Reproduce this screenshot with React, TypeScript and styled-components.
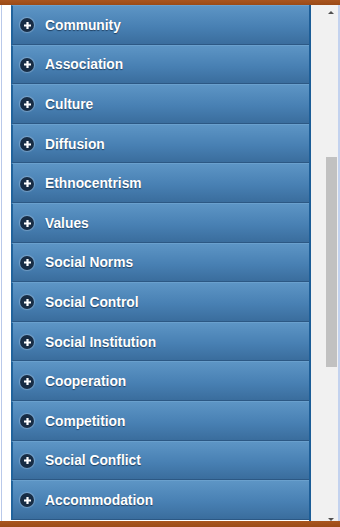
import React from 'react';
import styled, { createGlobalStyle } from 'styled-components';

const GlobalStyle = createGlobalStyle`
  html, body {
    margin: 0;
    padding: 0;
    background: #ffffff;
  }
  body {
    font-family: 'Liberation Sans', Arial, sans-serif;
  }
`;

const topics = [
  'Community',
  'Association',
  'Culture',
  'Diffusion',
  'Ethnocentrism',
  'Values',
  'Social Norms',
  'Social Control',
  'Social Institution',
  'Cooperation',
  'Competition',
  'Social Conflict',
  'Accommodation',
];

const Frame = styled.div`
  width: 340px;
  height: 527px;
  display: flex;
  flex-direction: column;
  overflow: hidden;
`;

const BrownBar = styled.div<{ h: number }>`
  height: ${(p) => p.h}px;
  flex: none;
  background: linear-gradient(#a9551e, #9a4a17);
`;

const Body = styled.div`
  flex: 1;
  display: flex;
  min-height: 0;
  background: #ffffff;
`;

const Gutter = styled.div`
  width: 9px;
  flex: none;
  border-left: 1px solid #b9c9ea;
  margin-left: 1px;
  background: #ffffff;
`;

const List = styled.ul`
  list-style: none;
  margin: 0;
  padding: 0;
  width: 298px;
  flex: none;
  border-right: 2px solid #1c5d97;
  display: flex;
  flex-direction: column;
`;

const Row = styled.li`
  height: 39.6px;
  box-sizing: border-box;
  display: flex;
  align-items: center;
  gap: 11px;
  padding-left: 7px;
  padding-top: 1px;
  border-left: 2px solid #21639c;
  border-top: 1px solid #6aa0cd;
  border-bottom: 1px solid #2c5884;
  background: linear-gradient(#5d95c5, #4880b3 55%, #3a6d9d);
  color: #ffffff;
  font-size: 13.8px;
  font-weight: bold;
  text-shadow: 0 1px 1px #1f3f60;
`;

const PlusIcon = styled.span`
  width: 14px;
  height: 14px;
  flex: none;
  display: flex;
  align-items: center;
  justify-content: center;
  border-radius: 50%;
  background: #172c44;
  box-shadow: 0 0 1px 1px rgba(200, 220, 240, 0.35);
`;

const Track = styled.div`
  width: 26px;
  flex: none;
  background: #f1f1f1;
  display: flex;
  flex-direction: column;
  align-items: flex-end;
  padding-right: 1px;
`;

const Arrow = styled.div<{ down?: boolean }>`
  width: 0;
  height: 0;
  margin: ${(p) => (p.down ? 'auto 3px 0 0' : '6px 3px 0 0')};
  border-left: 3px solid transparent;
  border-right: 3px solid transparent;
  ${(p) =>
    p.down
      ? 'border-top: 3px solid #505050;'
      : 'border-bottom: 3px solid #505050;'}
`;

const Thumb = styled.div`
  width: 11px;
  height: 210px;
  margin-top: 143px;
  background: #c1c1c1;
`;

const EdgeLine = styled.div`
  width: 2px;
  flex: none;
  background: #c3d2ee;
`;

const Plus = () => (
  <PlusIcon>
    <svg width="9" height="9" viewBox="0 0 9 9">
      <path d="M4.5 1v7M1 4.5h7" stroke="#ffffff" strokeWidth="2.2" />
    </svg>
  </PlusIcon>
);

const App = () => (
  <>
    <GlobalStyle />
    <Frame>
      <BrownBar h={5} />
      <Body>
        <Gutter />
        <List>
          {topics.map((t) => (
            <Row key={t}>
              <Plus />
              <span>{t}</span>
            </Row>
          ))}
        </List>
        <Track>
          <Arrow />
          <Thumb />
          <Arrow down />
        </Track>
        <EdgeLine />
      </Body>
      <BrownBar h={6} />
    </Frame>
  </>
);

export default App;
